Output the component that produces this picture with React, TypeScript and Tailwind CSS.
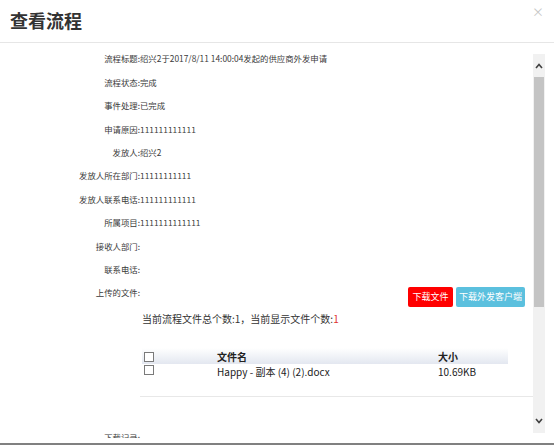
import React from 'react';

const rows: [string, string][] = [
  ['流程标题:', '绍兴2于2017/8/11 14:00:04发起的供应商外发申请'],
  ['流程状态:', '完成'],
  ['事件处理:', '已完成'],
  ['申请原因:', '111111111111'],
  ['发放人:', '绍兴2'],
  ['发放人所在部门:', '11111111111'],
  ['发放人联系电话:', '111111111111'],
  ['所属项目:', '1111111111111'],
  ['接收人部门:', ''],
  ['联系电话:', ''],
];

function Checkbox() {
  return <span className="block h-[10px] w-[10px] border border-[#7a7a7a] bg-white" />;
}

function Chevron({ up }: { up?: boolean }) {
  return (
    <svg width="8" height="6" viewBox="0 0 8 6" aria-hidden="true">
      <polyline
        points={up ? '1,5 4,1.5 7,5' : '1,1 4,4.5 7,1'}
        fill="none"
        stroke="#404040"
        strokeWidth="1.6"
      />
    </svg>
  );
}

export default function App() {
  return (
    <div
      className="flex h-[447px] w-[554px] flex-col overflow-hidden bg-white text-[#3a3a3a]"
      style={{ fontFamily: '"Noto Sans CJK SC", "Noto Sans", sans-serif' }}
    >
      <div className="flex h-[43px] shrink-0 justify-between border-b border-[#e6e6e6] pl-[10px] pr-[10px]">
        <h1 className="mt-[8px] text-[18px] font-bold leading-[24px] text-[#333]">查看流程</h1>
        <span className="mt-[5px] text-[12px] leading-[14px] text-[#c6c6c6]">×</span>
      </div>

      <div className="flex h-[402px] shrink-0 border-b-2 border-[#808080]">
        <div className="h-[395px] flex-1 overflow-hidden pt-[4px] text-[8.4px]">
          {rows.map(([label, value]) => (
            <div key={label} className="flex h-[23.4px] items-center">
              <span className="w-[140px] shrink-0 text-right">{label}</span>
              <span>{value}</span>
            </div>
          ))}
          <div className="flex h-[23.4px] items-center">
            <span className="w-[140px] shrink-0 text-right">上传的文件:</span>
            <div className="ml-auto mr-[8px] mt-[8px] flex gap-[3px] text-[9px] text-white">
              <button className="h-[20px] w-[45px] rounded-[2px] bg-[#ff0000]">下载文件</button>
              <button className="h-[20px] w-[69px] rounded-[2px] bg-[#5bc0de]">下载外发客户端</button>
            </div>
          </div>

          <p className="ml-[142px] mt-[8px] text-[10px] leading-[14px] text-[#333]">
            当前流程文件总个数:1，当前显示文件个数:<span className="text-[#e03030]">1</span>
          </p>

          <div className="ml-[142px] mt-[22px] w-[366px] text-[10px] text-[#222]">
            <div className="flex h-[16px] items-center bg-gradient-to-b from-white to-[#e3e7f0] font-bold">
              <span className="w-[75px] pl-[2px] pt-[2px]">
                <Checkbox />
              </span>
              <span className="w-[221px]">文件名</span>
              <span>大小</span>
            </div>
            <div className="flex h-[15px] items-center">
              <span className="w-[75px] pl-[2px] pb-[4px]">
                <Checkbox />
              </span>
              <span className="w-[221px]">Happy - 副本 (4) (2).docx</span>
              <span>10.69KB</span>
            </div>
          </div>

          <div className="ml-[140px] mt-[17px] border-t border-[#e8e8e8]" />

          <div className="mt-[28px] flex h-[23.4px] items-center">
            <span className="w-[140px] shrink-0 text-right">下载记录:</span>
          </div>
        </div>

        <div className="mr-[9px] mt-[11px] flex h-[379px] w-[12px] shrink-0 flex-col bg-[#f1f1f1]">
          <div className="flex h-[23px] items-center justify-center">
            <Chevron up />
          </div>
          <div className="mx-[1px] h-[230px] bg-[#c4c4c4]" />
          <div className="flex-1" />
          <div className="flex h-[24px] items-center justify-center">
            <Chevron />
          </div>
        </div>
      </div>
    </div>
  );
}
